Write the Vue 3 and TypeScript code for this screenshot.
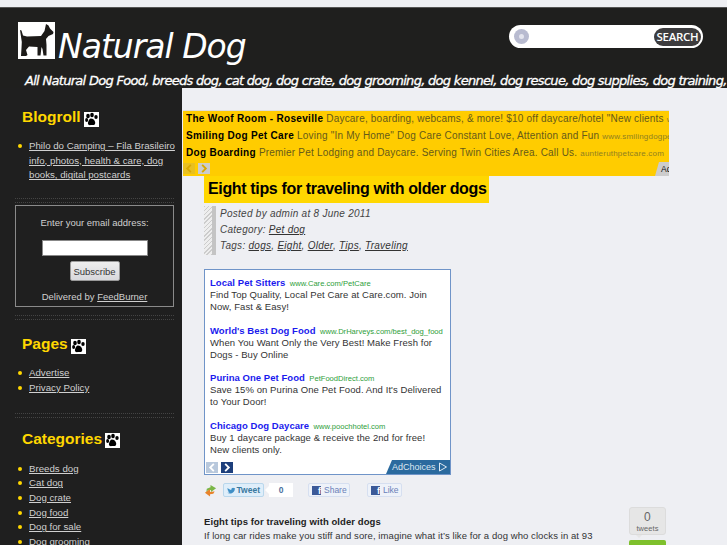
<script setup lang="ts">
interface AdRow {
  title: string;
  url: string;
  body: string;
}

const bannerAds = [
  { title: 'The Woof Room - Roseville', body: 'Daycare, boarding, webcams, & more! $10 off daycare/hotel "New clients', url: 'www.thewoofroom.com' },
  { title: 'Smiling Dog Pet Care', body: 'Loving "In My Home" Dog Care Constant Love, Attention and Fun', url: 'www.smilingdogpetcare.com' },
  { title: 'Dog Boarding', body: 'Premier Pet Lodging and Daycare. Serving Twin Cities Area. Call Us.', url: 'auntieruthpetcare.com' },
];

const boxAds: AdRow[] = [
  { title: 'Local Pet Sitters', url: 'www.Care.com/PetCare', body: 'Find Top Quality, Local Pet Care at Care.com. Join Now, Fast & Easy!' },
  { title: "World's Best Dog Food", url: 'www.DrHarveys.com/best_dog_food', body: 'When You Want Only the Very Best! Make Fresh for Dogs - Buy Online' },
  { title: 'Purina One Pet Food', url: 'PetFoodDirect.com', body: "Save 15% on Purina One Pet Food. And It's Delivered to Your Door!" },
  { title: 'Chicago Dog Daycare', url: 'www.poochhotel.com', body: 'Buy 1 daycare package & receive the 2nd for free! New clients only.' },
];

const categories = ['Breeds dog', 'Cat dog', 'Dog crate', 'Dog food', 'Dog for sale', 'Dog grooming'];
const tags = ['dogs', 'Eight', 'Older', 'Tips', 'Traveling'];
</script>

<template>
  <div class="page">
    <header class="head">
      <div class="head-top">
        <div class="brand">
          <svg class="logo" viewBox="0 0 37 37">
            <rect width="37" height="37" fill="#fff" />
            <path
              d="M2 8 L3.5 8.5 L5 13.5 L9 14.5 L23 14 L26.5 9 L28 2 L30.5 3.5 L32 6.5 L35.5 10 L35 12 L30.5 14 L28 17 L28.5 23 L28.5 33.5 L25.5 33.5 L24.5 27 L23.5 25 L22.5 33.5 L19.5 33.5 L19.5 25 L11 24.5 L8 28 L9.5 33 L8 34 L3 34 L3.5 26 L3.8 20 Z"
              fill="#1c1a18"
            />
          </svg>
          <h1 class="site-name">Natural Dog</h1>
        </div>
        <form class="search" @submit.prevent>
          <span class="search-disc"><i></i></span>
          <input class="search-input" type="text" />
          <button class="search-btn">SEARCH</button>
        </form>
      </div>
      <p class="tagline">All Natural Dog Food, breeds dog, cat dog, dog crate, dog grooming, dog kennel, dog rescue, dog supplies, dog training,</p>
    </header>

    <div class="columns">
      <aside class="side">
        <section class="widget first">
          <h2 class="widget-title">Blogroll <svg class="paw" viewBox="0 0 15 15"><rect width="15" height="15" fill="#fff" /><g fill="#000"><ellipse cx="4" cy="4" rx="1.8" ry="2.2" /><ellipse cx="8" cy="3" rx="1.8" ry="2.2" /><ellipse cx="12" cy="5" rx="1.7" ry="2.1" /><ellipse cx="2.6" cy="8" rx="1.5" ry="1.9" /><path d="M7 6.5 C10 6.5 12 10 11 12 C10 14 8.5 12.5 7 13 C5 13.5 3.5 12.5 4 10.5 C4.5 8.5 5.5 6.5 7 6.5 Z" /></g></svg></h2>
          <ul class="side-list">
            <li><a href="#">Philo do Camping – Fila Brasileiro info, photos, health &amp; care, dog books, digital postcards</a></li>
          </ul>
        </section>
        <div class="dots"></div>
        <form class="subscribe" @submit.prevent>
          <p>Enter your email address:</p>
          <input class="sub-input" type="text" />
          <button class="sub-btn">Subscribe</button>
          <p class="sub-by">Delivered by <a href="#">FeedBurner</a></p>
        </form>
        <div class="dots"></div>
        <section class="widget pages">
          <h2 class="widget-title">Pages <svg class="paw" viewBox="0 0 15 15"><rect width="15" height="15" fill="#fff" /><g fill="#000"><ellipse cx="4" cy="4" rx="1.8" ry="2.2" /><ellipse cx="8" cy="3" rx="1.8" ry="2.2" /><ellipse cx="12" cy="5" rx="1.7" ry="2.1" /><ellipse cx="2.6" cy="8" rx="1.5" ry="1.9" /><path d="M7 6.5 C10 6.5 12 10 11 12 C10 14 8.5 12.5 7 13 C5 13.5 3.5 12.5 4 10.5 C4.5 8.5 5.5 6.5 7 6.5 Z" /></g></svg></h2>
          <ul class="side-list">
            <li><a href="#">Advertise</a></li>
            <li><a href="#">Privacy Policy</a></li>
          </ul>
        </section>
        <div class="dots"></div>
        <section class="widget cats">
          <h2 class="widget-title">Categories <svg class="paw" viewBox="0 0 15 15"><rect width="15" height="15" fill="#fff" /><g fill="#000"><ellipse cx="4" cy="4" rx="1.8" ry="2.2" /><ellipse cx="8" cy="3" rx="1.8" ry="2.2" /><ellipse cx="12" cy="5" rx="1.7" ry="2.1" /><ellipse cx="2.6" cy="8" rx="1.5" ry="1.9" /><path d="M7 6.5 C10 6.5 12 10 11 12 C10 14 8.5 12.5 7 13 C5 13.5 3.5 12.5 4 10.5 C4.5 8.5 5.5 6.5 7 6.5 Z" /></g></svg></h2>
          <ul class="side-list">
            <li v-for="c in categories" :key="c"><a href="#">{{ c }}</a></li>
          </ul>
        </section>
      </aside>

      <main class="main">
        <div class="banner">
          <div v-for="ad in bannerAds" :key="ad.title" class="banner-row">
            <b>{{ ad.title }}</b> {{ ad.body }} <small>{{ ad.url }}</small>
          </div>
          <div class="banner-foot">
            <span class="ban-arrow off"><svg viewBox="0 0 12 12"><path d="M8 2 L4 6 L8 10" /></svg></span>
            <span class="ban-arrow"><svg viewBox="0 0 12 12"><path d="M4 2 L8 6 L4 10" /></svg></span>
          </div>
          <span class="ban-choice">Ad</span>
        </div>

        <article class="post">
          <h2 class="post-title">Eight tips for traveling with older dogs</h2>
          <div class="meta">
            <div>Posted by admin at 8 June 2011</div>
            <div>Category: <a href="#">Pet dog</a></div>
            <div>Tags: <template v-for="(t, i) in tags" :key="t"><a href="#">{{ t }}</a><span v-if="i < tags.length - 1">, </span></template></div>
          </div>

          <div class="adbox">
            <div v-for="ad in boxAds" :key="ad.title" class="ad">
              <div class="ad-head"><b>{{ ad.title }}</b> <span>{{ ad.url }}</span></div>
              <p>{{ ad.body }}</p>
            </div>
            <div class="adbox-foot">
              <span class="box-arrow off"><svg viewBox="0 0 12 12"><path d="M8 2 L4 6 L8 10" /></svg></span>
              <span class="box-arrow"><svg viewBox="0 0 12 12"><path d="M4 2 L8 6 L4 10" /></svg></span>
              <span class="adchoices">AdChoices <svg viewBox="0 0 10 10"><path d="M1.5 1 L8.5 5 L1.5 9 Z" /></svg></span>
            </div>
          </div>

          <div class="share">
            <svg class="share-icon" viewBox="0 0 14 14">
              <path d="M7 1 L13 4.5 L7.5 8.5 L7.5 6.5 L4 7 L2.5 9 L3 5 L7 3.5 Z" fill="#7ab648" />
              <path d="M6.5 5.5 L1 9.5 L6.5 13.5 L6.5 11 L10 10.5 L11.5 8 L10.5 8 L6.5 8.5 Z" fill="#e8832a" />
            </svg>
            <span class="sh-btn tweet">
              <svg viewBox="0 0 14 12"><path d="M1 2 C3 4 5 5 7 5 C7 2 10 0.5 12 2.5 L13.5 2 L12.8 3.6 C12.8 8 9 11 5 11 C3 11 1.5 10.5 0.5 9.8 C2 9.8 3 9.5 4 8.8 C2.5 8.5 1.5 7.5 1.2 6.2 L2.5 6.2 C1 5.2 0.5 3.5 1 2 Z" fill="#3f8fc6" /></svg>
              Tweet
            </span>
            <span class="tw-count">0</span>
            <span class="sh-btn fb"><i>f</i>Share</span>
            <span class="sh-btn fb like"><i>f</i>Like</span>
          </div>

          <div class="body-wrap">
            <div class="tweets">
              <div class="tw-bubble"><b>0</b><span>tweets</span></div>
              <div class="tw-green"></div>
            </div>
            <strong>Eight tips for traveling with older dogs</strong>
            <p>If long car rides make you stiff and sore, imagine what it’s like for a dog who clocks in at 93 pounds. Thankfully there are things you can do to help him travel.</p>
          </div>
        </article>
      </main>
    </div>
  </div>
</template>

<style>
html,
body {
  margin: 0;
  height: 545px;
  overflow: hidden;
  background: #eeeff3;
}
</style>

<style scoped>
.page {
  height: 545px;
  overflow: hidden;
  font-family: 'Liberation Sans', Arial, sans-serif;
  padding-top: 7px;
  box-sizing: border-box;
}
.head {
  height: 81px;
  box-sizing: border-box;
  background: #1f1f1e;
  border-top: 1px solid #555;
  overflow: hidden;
}
.head-top {
  display: flex;
  justify-content: space-between;
  padding: 14px 24px 0 18px;
  height: 48px;
}
.brand {
  display: flex;
  align-items: flex-start;
  gap: 3px;
}
.logo {
  width: 37px;
  height: 37px;
  display: block;
}
.site-name {
  margin: 0;
  color: #fff;
  font: italic 400 33px/50px 'DejaVu Sans', sans-serif;
  letter-spacing: -1px;
  white-space: nowrap;
}
.search {
  display: flex;
  align-items: center;
  box-sizing: border-box;
  width: 194px;
  height: 23px;
  margin-top: 3px;
  background: #fff;
  border-radius: 12px;
  padding: 0 2px 0 5px;
}
.search-disc {
  width: 15px;
  height: 15px;
  border-radius: 50%;
  background: #b8bbd0;
  display: flex;
  align-items: center;
  justify-content: center;
  flex: none;
}
.search-disc i {
  width: 5px;
  height: 5px;
  border-radius: 50%;
  background: #e4e5ee;
}
.search-input {
  flex: 1;
  min-width: 0;
  border: 0;
  outline: 0;
  background: transparent;
}
.search-btn {
  width: 47px;
  height: 18px;
  padding: 0;
  border: 0;
  border-radius: 9px;
  background: #3d3c3e;
  color: #fff;
  font: 600 11.5px/18px 'Open Sans', sans-serif;
  letter-spacing: -0.3px;
}
.tagline {
  margin: 0 0 0 25px;
  color: #fff;
  font: italic 400 13px/22px 'DejaVu Sans', sans-serif;
  -webkit-text-stroke: 0.3px #fff;
  white-space: nowrap;
  letter-spacing: -0.7px;
}
.columns {
  display: flex;
  height: 457px;
}
.side {
  width: 182px;
  flex: none;
  background: #1f1f1f;
  box-sizing: border-box;
  padding: 0 8px 0 15px;
  overflow: hidden;
  font-size: 9.7px;
  color: #d0d0d0;
}
.first {
  margin-top: 6px;
}
.widget-title {
  margin: 0;
  padding: 12px 0 0 7px;
  font-size: 15.5px;
  line-height: 22px;
  color: #ffd700;
  font-weight: 700;
  display: flex;
  align-items: center;
  gap: 3px;
}
.pages .widget-title {
  padding-top: 13px;
}
.cats .widget-title {
  padding-top: 10px;
}
.paw {
  width: 15px;
  height: 15px;
  margin-top: 4px;
}
.side-list {
  list-style: none;
  margin: 0 -4px 0 0;
  padding: 11px 0 15px 14px;
}
.pages .side-list {
  padding-bottom: 17px;
}
.cats .side-list {
  padding-top: 12px;
}
.side-list li {
  position: relative;
  line-height: 14.7px;
}
.side-list li::before {
  content: '';
  position: absolute;
  left: -11px;
  top: 5px;
  width: 4px;
  height: 4px;
  border-radius: 50%;
  background: #ffd700;
}
.side-list a,
.sub-by a {
  color: #d0d0d0;
}
.dots {
  height: 5px;
  border-top: 1px dotted #444;
  border-bottom: 1px dotted #444;
  box-sizing: border-box;
}
.subscribe {
  margin: 2px 0 8px;
  height: 102px;
  box-sizing: border-box;
  border: 1px solid #8a8a8a;
  display: flex;
  flex-direction: column;
  align-items: center;
  padding-top: 10px;
  font-size: 9.5px;
}
.subscribe p {
  margin: 0;
  line-height: 14px;
}
.sub-input {
  width: 106px;
  height: 16px;
  box-sizing: border-box;
  border: 1px solid #888;
  margin-top: 10px;
  background: #fff;
  outline: 0;
}
.sub-btn {
  width: 50px;
  height: 20px;
  margin-top: 5px;
  padding: 0;
  border: 1px solid #999;
  border-radius: 2px;
  background: linear-gradient(#eee, #d8d8dc);
  color: #333;
  font: 9.5px 'Liberation Sans', sans-serif;
}
.sub-by {
  margin-top: 9px !important;
}
.main {
  flex: 1;
  min-width: 0;
  padding-top: 22px;
  color: #333;
}
.banner {
  width: 486px;
  height: 66px;
  margin-left: 1px;
  background: #fc0;
  box-sizing: border-box;
  padding: 0 0 0 3px;
  overflow: hidden;
  box-shadow: inset 0 1px #ddd;
  position: relative;
}
.banner-row {
  font-size: 10px;
  line-height: 17px;
  height: 17px;
  white-space: nowrap;
  color: #665a1a;
  letter-spacing: 0.2px;
}
.banner-row b {
  color: #000;
  letter-spacing: 0.32px;
}
.banner-row small {
  font-size: 8px;
  line-height: 0;
  color: #8f7f20;
  letter-spacing: 0.2px;
}
.banner-foot {
  margin: 2px 0 0 -3px;
  display: flex;
  gap: 3px;
}
.ban-arrow {
  width: 12px;
  height: 11px;
  background: #ccc;
}
.ban-arrow.off {
  background: #e8c020;
}
.ban-arrow svg,
.box-arrow svg {
  display: block;
  width: 100%;
  height: 100%;
  fill: none;
  stroke: #d9a800;
  stroke-width: 2;
}
.ban-choice {
  position: absolute;
  right: 0;
  bottom: 0;
  width: 14px;
  height: 14px;
  box-sizing: border-box;
  padding-left: 6px;
  overflow: hidden;
  background: #ccc;
  clip-path: polygon(4px 0, 100% 0, 100% 100%, 0 100%);
  color: #111;
  font-size: 8.5px;
  line-height: 15px;
  white-space: nowrap;
}
.post {
  padding-left: 22px;
}
.post-title {
  margin: 0;
  width: 285px;
  box-sizing: border-box;
  height: 27px;
  padding-left: 4px;
  background: #ffd700;
  color: #000;
  font-size: 16px;
  line-height: 26px;
  font-weight: 700;
  letter-spacing: -0.35px;
  white-space: nowrap;
}
.meta {
  margin: 3px 0 0 8px;
  height: 49px;
  font-size: 10px;
  font-style: italic;
  line-height: 16px;
  letter-spacing: 0.27px;
  color: #444;
  border-left: 4px solid #c4c4c4;
  padding-left: 4px;
  position: relative;
}
.meta::before {
  content: '';
  position: absolute;
  left: -12px;
  top: 0;
  bottom: 0;
  width: 8px;
  background: repeating-linear-gradient(135deg, #ccc 0 1px, #eee 1px 3px);
}
.meta a {
  color: #333;
}
.adbox {
  width: 247px;
  height: 206px;
  box-sizing: border-box;
  margin-top: 14px;
  border: 1px solid #6f94c8;
  background: #fff;
  padding: 2px 5px 0;
  position: relative;
}
.ad {
  height: 47.7px;
}
.ad-head {
  line-height: 17px;
  height: 17px;
  white-space: nowrap;
}
.ad-head b {
  color: #1a1aee;
  font-size: 9.5px;
  letter-spacing: 0.05px;
}
.ad-head span {
  color: #2e9e3a;
  font-size: 7.6px;
}
.ad p {
  margin: 0;
  line-height: 12px;
  font-size: 9.5px;
  letter-spacing: 0.08px;
}
.adbox-foot {
  position: absolute;
  left: 1px;
  right: 0;
  bottom: 1px;
  height: 11px;
  display: flex;
  gap: 3px;
}
.box-arrow {
  width: 12px;
  height: 11px;
  background: #1d3f7c;
}
.box-arrow svg {
  stroke: #fff;
}
.box-arrow.off {
  background: #b8c8dc;
}
.adchoices {
  position: absolute;
  right: 0;
  bottom: -1px;
  width: 64px;
  height: 14px;
  background: #2b6a9e;
  color: #dce8f2;
  font-size: 9px;
  line-height: 14px;
  text-align: right;
  padding-right: 2px;
  box-sizing: border-box;
  clip-path: polygon(6px 0, 100% 0, 100% 100%, 0 100%);
  white-space: nowrap;
}
.adchoices svg {
  width: 10px;
  height: 10px;
  fill: none;
  stroke: #dce8f2;
  vertical-align: -2px;
}
.share {
  display: flex;
  align-items: center;
  height: 16px;
  margin-top: 7px;
  font-size: 8.5px;
}
.share-icon {
  width: 13px;
  height: 13px;
  margin-right: 6px;
}
.sh-btn {
  height: 14px;
  box-sizing: border-box;
  display: inline-flex;
  align-items: center;
  gap: 3px;
  padding: 0 3px;
  border: 1px solid #d6dff0;
  background: #eef2f9;
  color: #6a80b8;
  border-radius: 2px;
}
.tweet {
  width: 41px;
  color: #39789f;
  font-weight: 700;
  gap: 1px;
  background: #dfeefa;
  border-color: #b9d7ec;
}
.tweet svg {
  width: 10px;
  height: 9px;
}
.tw-count {
  width: 24px;
  height: 14px;
  background: #fff;
  margin: 0 15px 0 5px;
  text-align: center;
  line-height: 14px;
  color: #4a6fa0;
  font-weight: 700;
  position: relative;
}
.tw-count::before {
  content: '';
  position: absolute;
  left: -4px;
  top: 3px;
  border: 4px solid transparent;
  border-left: 0;
  border-right-color: #fff;
}
.fb {
  width: 42px;
}
.like {
  width: 35px;
  margin-left: 17px;
}
.fb i {
  width: 9px;
  height: 9px;
  flex: none;
  background: #3b5998;
  color: #fff;
  font: 700 9px/10px 'Liberation Sans', sans-serif;
  text-align: right;
}
.body-wrap {
  margin-top: 17px;
  width: 404px;
  position: relative;
  font-size: 9.5px;
  letter-spacing: 0.08px;
  line-height: 13.5px;
}
.body-wrap strong {
  color: #222;
}
.body-wrap p {
  margin: 0;
}
.tweets {
  position: absolute;
  left: 425px;
  top: -8px;
  width: 37px;
  text-align: center;
}
.tw-bubble {
  height: 28px;
  background: #e6e6e6;
  border: 1px solid #dcdcdc;
  border-radius: 3px;
  display: flex;
  flex-direction: column;
  color: #666;
  box-sizing: border-box;
  line-height: 9px;
  padding-top: 2px;
  position: relative;
}
.tw-bubble::after {
  content: '';
  position: absolute;
  left: 6px;
  bottom: -4px;
  border: 3px solid transparent;
  border-bottom: 0;
  border-top-color: #e6e6e6;
}
.tw-bubble b {
  font-weight: 400;
  font-size: 12px;
  line-height: 14px;
}
.tw-bubble span {
  font-size: 7.5px;
}
.tw-green {
  height: 10px;
  margin-top: 5px;
  background: #7ec02c;
  border-radius: 2px 2px 0 0;
}
</style>
